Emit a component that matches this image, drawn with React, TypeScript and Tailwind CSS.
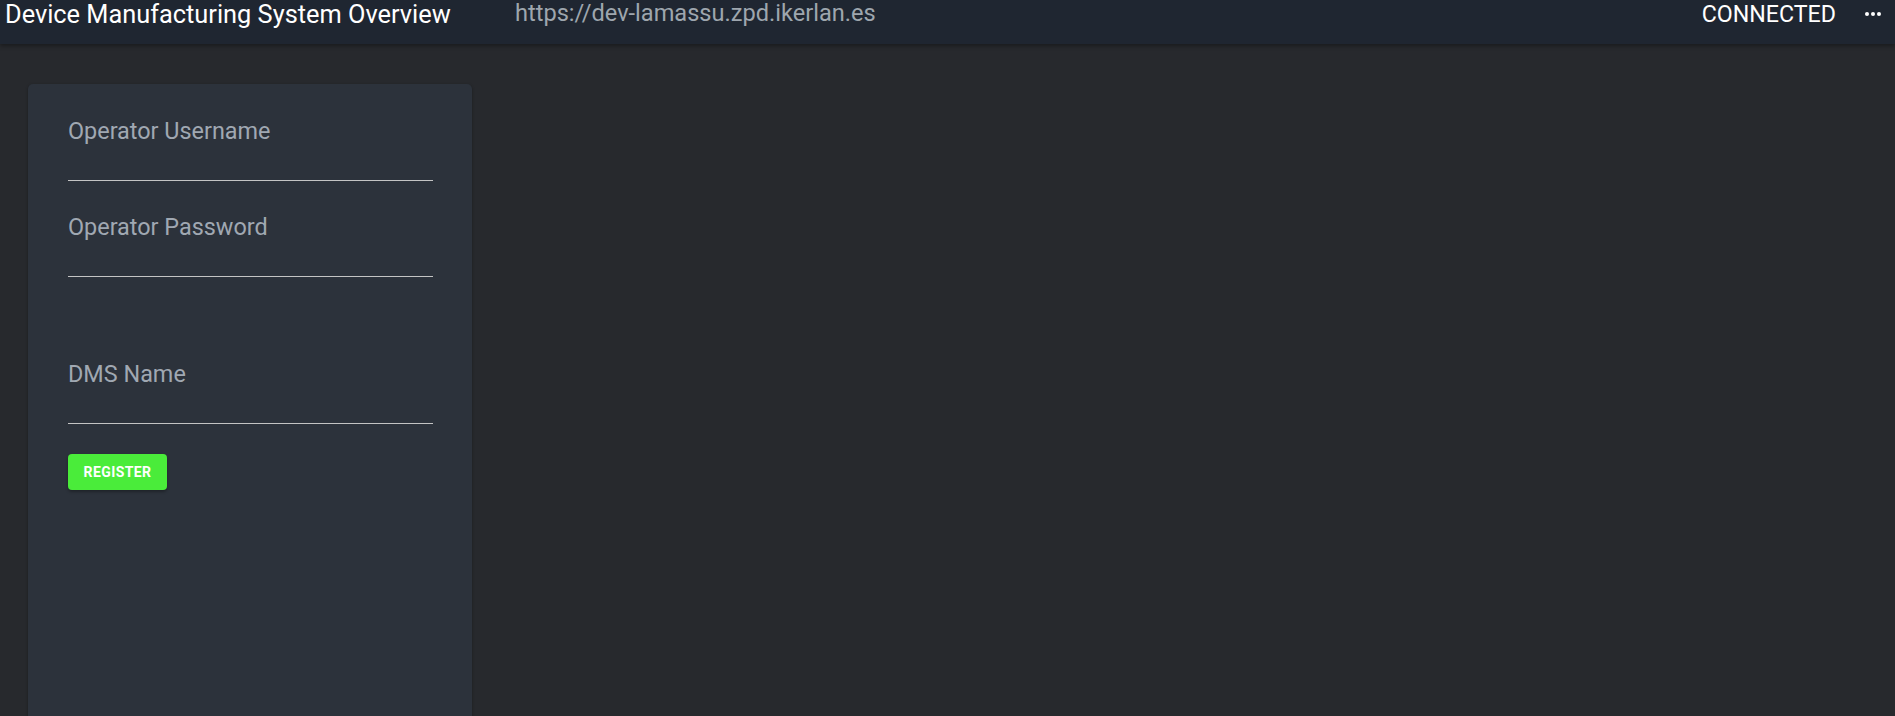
import React from "react";

const fields = [
	{ label: "Operator Username", gap: "mt-[33px]" },
	{ label: "Operator Password", gap: "mt-[32px]" },
	{ label: "DMS Name", gap: "mt-[83px]" },
];

function MoreIcon() {
	return (
		<svg width="24" height="24" viewBox="0 0 24 24" fill="#ffffff">
			<circle cx="6" cy="12" r="2" />
			<circle cx="12" cy="12" r="2" />
			<circle cx="18" cy="12" r="2" />
		</svg>
	);
}

export default function App() {
	return (
		<div
			className="h-screen overflow-hidden flex flex-col bg-[#27292d]"
			style={{ fontFamily: "Roboto, 'Liberation Sans', sans-serif" }}
		>
			{/* Top bar */}
			<header className="relative z-10 h-[44px] shrink-0 flex items-start bg-[#1f2631] shadow-[0_2px_4px_rgba(0,0,0,0.35)]">
				<div className="w-[515px] shrink-0 pl-[5px] text-[25.35px] leading-[30px] -mt-[1.5px] text-white whitespace-nowrap">
					Device Manufacturing System Overview
				</div>
				<div className="text-[23.6px] leading-[27px] text-[#9ea6ae] whitespace-nowrap">
					https://dev-lamassu.zpd.ikerlan.es
				</div>
				<div className="ml-auto flex items-start pr-[10px]">
					<span className="text-[23.2px] leading-[28px] text-white">CONNECTED</span>
					<span className="ml-[25px] mt-[2px]">
						<MoreIcon />
					</span>
				</div>
			</header>

			{/* Content */}
			<main className="flex-1 min-h-0 flex pl-[28px] pt-[40px]">
				<div className="w-[444px] h-[700px] rounded-[5px] bg-[#2c323b] shadow-[0_1px_3px_rgba(0,0,0,0.35)] pl-[40px] pr-[39px]">
					{fields.map((f) => (
						<div key={f.label} className={f.gap}>
							<div className="text-[23.4px] leading-[28px] text-[#a0a8b2]">{f.label}</div>
							<div className="h-[36px] border-b border-[#c4c4c4]" />
						</div>
					))}
					<button className="mt-[30px] w-[99px] h-[36px] rounded-[4px] bg-[#4aec3a] text-white text-[14px] font-bold tracking-[0.4px] shadow-[0_2px_3px_rgba(0,0,0,0.3)]">
						REGISTER
					</button>
				</div>
			</main>
		</div>
	);
}
